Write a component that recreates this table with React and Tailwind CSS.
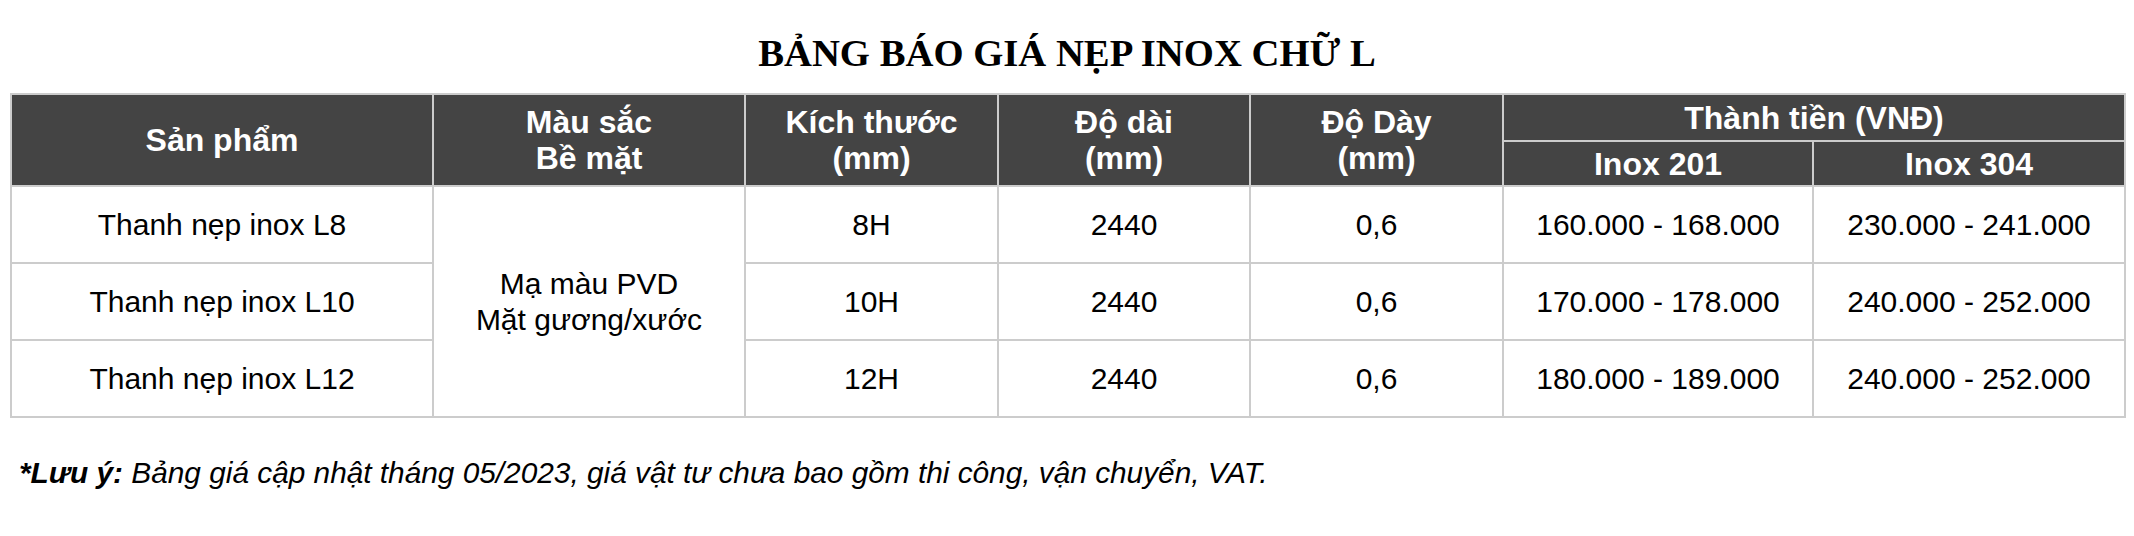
import React from "react";

const rows = [
  { name: "Thanh nẹp inox L8", size: "8H", p201: "160.000 - 168.000", p304: "230.000 - 241.000" },
  { name: "Thanh nẹp inox L10", size: "10H", p201: "170.000 - 178.000", p304: "240.000 - 252.000" },
  { name: "Thanh nẹp inox L12", size: "12H", p201: "180.000 - 189.000", p304: "240.000 - 252.000" },
];

const th = "border-2 border-[#cccccc] bg-[#444444] text-white font-bold text-[32px] leading-[36px] text-center align-middle p-0";
const td = "border-2 border-[#cccccc] bg-white text-black text-[30px] leading-[36px] text-center align-middle p-0";

export default function App() {
  return (
    <div className="w-[2134px] h-[536px] bg-white px-[10px]" style={{ fontFamily: '"Liberation Sans", Arial, sans-serif' }}>
      <h1
        className="pt-[34px] h-[73px] mb-[20px] text-center text-[38.7px] leading-[39px] font-bold text-black"
        style={{ fontFamily: '"Liberation Serif", "Times New Roman", serif' }}
      >
        BẢNG BÁO GIÁ NẸP INOX CHỮ L
      </h1>
      <table className="border-collapse table-fixed w-[2114px]">
        <colgroup>
          <col className="w-[422px]" />
          <col className="w-[312px]" />
          <col className="w-[253px]" />
          <col className="w-[252px]" />
          <col className="w-[253px]" />
          <col className="w-[310px]" />
          <col className="w-[312px]" />
        </colgroup>
        <thead>
          <tr className="h-[47px]">
            <th rowSpan={2} className={th}>Sản phẩm</th>
            <th rowSpan={2} className={th}>Màu sắc<br />Bề mặt</th>
            <th rowSpan={2} className={th}>Kích thước<br />(mm)</th>
            <th rowSpan={2} className={th}>Độ dài<br />(mm)</th>
            <th rowSpan={2} className={th}>Độ Dày<br />(mm)</th>
            <th colSpan={2} className={th}>Thành tiền (VNĐ)</th>
          </tr>
          <tr className="h-[45px]">
            <th className={th}>Inox 201</th>
            <th className={th}>Inox 304</th>
          </tr>
        </thead>
        <tbody>
          {rows.map((r, i) => (
            <tr key={i} className="h-[77px]">
              <td className={td}>{r.name}</td>
              {i === 0 && (
                <td rowSpan={3} className={td}>
                  Mạ màu PVD<br />Mặt gương/xước
                </td>
              )}
              <td className={td}>{r.size}</td>
              <td className={td}>2440</td>
              <td className={td}>0,6</td>
              <td className={td}>{r.p201}</td>
              <td className={td}>{r.p304}</td>
            </tr>
          ))}
        </tbody>
      </table>
      <p className="mt-[40px] pl-[9px] text-[29.8px] leading-[30px] italic text-black">
        <span className="font-bold">*Lưu ý:</span> Bảng giá cập nhật tháng 05/2023, giá vật tư chưa bao gồm thi công, vận chuyển, VAT.
      </p>
    </div>
  );
}
